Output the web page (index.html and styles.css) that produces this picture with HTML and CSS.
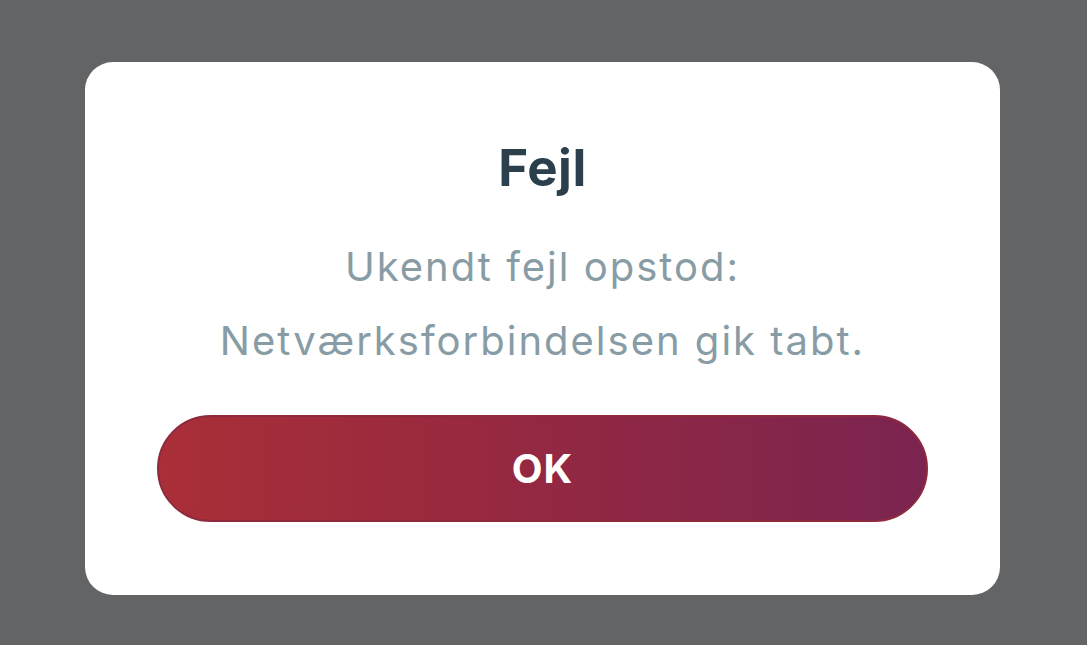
FILE: index.html
```html
<!DOCTYPE html>
<html lang="da">

<head>
  <meta charset="UTF-8">
  <meta name="viewport" content="width=device-width, initial-scale=1.0">
  <title>Fejl</title>
  <link rel="stylesheet" href="styles.css">
</head>

<body>
  <div class="overlay">
    <div class="alert-box">
      <h2 class="alert-title">Fejl</h2>
      <div class="alert-message">
        <p>Ukendt fejl opstod:</p>
        <p>Netværksforbindelsen gik tabt.</p>
      </div>
      <button type="button" class="ok-button">OK</button>
    </div>
  </div>
</body>

</html>
```

FILE: styles.css
```css
body {
  font-family: Inter, "Noto Sans", sans-serif;
  margin: 0;
  padding: 0;
  background-color: #636466;
}

.overlay {
  height: 645px;
  padding-top: 62px;
  padding-left: 85px;
  box-sizing: border-box;
}

.alert-box {
  width: 915px;
  height: 533px;
  box-sizing: border-box;
  background-color: #ffffff;
  border-radius: 28px;
  padding: 76px 72px 0 72px;
  display: flex;
  flex-direction: column;
  align-items: center;
}

.alert-title {
  margin: 0;
  font-size: 51px;
  line-height: 60px;
  font-weight: 700;
  color: #2b3f4d;
  letter-spacing: 0.5px;
}

.alert-message {
  margin-top: 32px;
  text-align: center;
  color: #889ca6;
  font-size: 40px;
  letter-spacing: 2px;
}

.alert-message p {
  margin: 0;
  line-height: 74px;
}

.ok-button {
  margin-top: 37px;
  width: 771px;
  height: 107px;
  border: 2px solid #8d2a3e;
  border-radius: 54px;
  background: linear-gradient(to right, #a92f38, #98293f 40%, #7b2450);
  color: #ffffff;
  font-family: Inter, "Noto Sans", sans-serif;
  font-size: 40px;
  font-weight: 700;
  letter-spacing: 1px;
}
```
